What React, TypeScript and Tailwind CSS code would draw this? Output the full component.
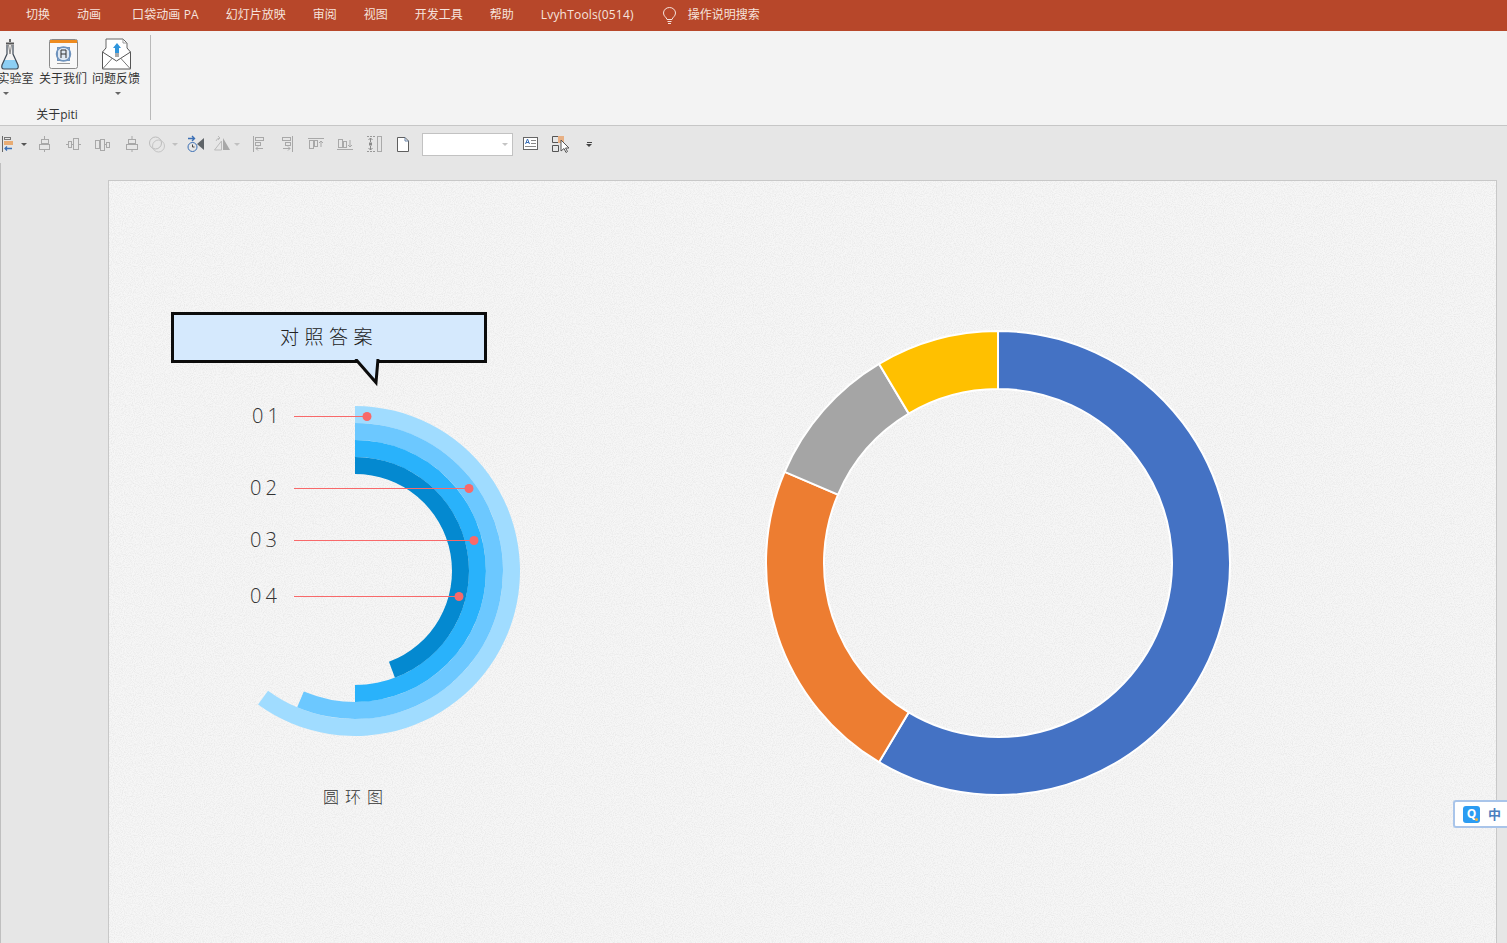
import type { ReactNode } from "react";

const tabs = [
  { label: "切换", cls: "" },
  { label: "动画", cls: "ml-[27px]" },
  { label: "口袋动画 PA", cls: "ml-[31px] tracking-[0.1px]" },
  { label: "幻灯片放映", cls: "ml-[27px]" },
  { label: "审阅", cls: "ml-[27px]" },
  { label: "视图", cls: "ml-[27px]" },
  { label: "开发工具", cls: "ml-[27px]" },
  { label: "帮助", cls: "ml-[27px]" },
  { label: "LvyhTools(0514)", cls: "ml-[27px] tracking-[0.2px]" },
];

function polar(cx: number, cy: number, r: number, deg: number) {
  const a = ((deg - 90) * Math.PI) / 180;
  return [cx + r * Math.cos(a), cy + r * Math.sin(a)];
}

// ring sector going clockwise from the top
function arcPath(cx: number, cy: number, r0: number, r1: number, from: number, to: number) {
  const [ax, ay] = polar(cx, cy, r1, from);
  const [bx, by] = polar(cx, cy, r1, to);
  const [c, d] = polar(cx, cy, r0, to);
  const [e, f] = polar(cx, cy, r0, from);
  const large = to - from > 180 ? 1 : 0;
  return `M${ax} ${ay}A${r1} ${r1} 0 ${large} 1 ${bx} ${by}L${c} ${d}A${r0} ${r0} 0 ${large} 0 ${e} ${f}Z`;
}

function Caret({ color = "#666" }: { color?: string }) {
  return (
    <svg className="block" width="6" height="3" viewBox="0 0 6 3">
      <path d="M0 0h6L3 3z" fill={color} />
    </svg>
  );
}

function ToolIcon({ children, w = 16 }: { children: ReactNode; w?: number }) {
  return (
    <svg className="block shrink-0" width={w} height="18" viewBox={`0 0 ${w} 18`} fill="none" stroke="#a8a8a8" strokeWidth="1">
      {children}
    </svg>
  );
}

function FlaskIcon() {
  return (
    <svg className="block" width="20" height="31" viewBox="0 0 20 31" fill="none">
      <path d="M3.500 30q-2.500-.500-1.500-4l2-5h12l2 5q1 3.500-1.500 4z" fill="#8ccff5" />
      <path d="M7 6v9L2 26q-1 4 2 4h12q3 0 2-4l-5-11V6" stroke="#3f4a57" strokeWidth="1.200" />
      <path d="M6 4.500h8" stroke="#555" strokeWidth="2" />
      <path d="M9 0h2v3H9z" fill="#666" />
      <path d="M8.500 6l1.500 9M11.500 6L10 15" stroke="#888" />
    </svg>
  );
}

function AboutIcon() {
  return (
    <svg className="mb-[1px] block" width="29" height="30" viewBox="0 0 29 30" fill="none">
      <rect x="0.500" y="0.500" width="28" height="29" rx="2" fill="#f8f8f8" stroke="#8a8a8a" />
      <rect x="1" y="1" width="27" height="3" fill="#ee8b1f" />
      <rect x="8.500" y="8.500" width="12" height="13" fill="#dfe8f2" stroke="#6f93bd" />
      <circle cx="14.500" cy="15" r="7" stroke="#6f93bd" strokeWidth="1.500" />
      <path d="M12 11v8M17 11v8M12 11h5M12 15h5" stroke="#333" />
      <path d="M8 24.500h13" stroke="#999" />
    </svg>
  );
}

function MailIcon() {
  return (
    <svg className="block" width="29" height="32" viewBox="0 0 29 32" fill="none">
      <path d="M4 15V1h17l4 4v10" fill="#fff" stroke="#666" />
      <path d="M21 1v4h4" stroke="#999" />
      <path d="M4 10L.500 14v17h28V14L25 10" fill="#fff" stroke="#555" />
      <path d="M.500 14L14.500 23L28.500 14" fill="#fff" stroke="#555" />
      <path d="M.500 31l10-11M28.500 31l-10-11" stroke="#777" />
      <path d="M15 5l4 5h-2v5h-4v-5h-2z" fill="#2f95dc" />
      <path d="M13 16h4M13 18h4" stroke="#555" />
    </svg>
  );
}

function RingChart() {
  const cx = 246;
  const cy = 390;
  const rings = [
    { r0: 148, r1: 165, end: 216, fill: "#a0dcff" },
    { r0: 131, r1: 148, end: 203, fill: "#6cc8ff" },
    { r0: 114, r1: 131, end: 180, fill: "#29b2fb" },
    { r0: 97, r1: 114, end: 159.5, fill: "#0489d0" },
  ];
  const marks = [
    { y: 235, x: 258 },
    { y: 307, x: 360 },
    { y: 359, x: 365 },
    { y: 415, x: 350 },
  ];
  return (
    <svg className="absolute left-0 top-0" width="500" height="640" viewBox="0 0 500 640">
      {rings.map((r) => (
        <path key={r.fill} d={arcPath(cx, cy, r.r0, r.r1, 0, r.end)} fill={r.fill} />
      ))}
      {marks.map((m) => (
        <g key={m.y}>
          <line x1="185" x2={m.x} y1={m.y + 0.5} y2={m.y + 0.5} stroke="#f8696a" strokeWidth="1" />
          <circle cx={m.x} cy={m.y + 0.5} r="4.500" fill="#f8696a" />
        </g>
      ))}
    </svg>
  );
}

function DonutChart() {
  const c = 232;
  const parts = [
    { from: 0, to: 210.86, fill: "#4472c4" },
    { from: 210.86, to: 293.14, fill: "#ed7d31" },
    { from: 293.14, to: 329.14, fill: "#a5a5a5" },
    { from: 329.14, to: 360, fill: "#ffc000" },
  ];
  return (
    <svg className="absolute left-[657px] top-[149.500px] overflow-visible" width="464" height="464" viewBox="0 0 464 464">
      {parts.map((p) => (
        <path key={p.fill} d={arcPath(c, c, 174, 232, p.from, p.to)} fill={p.fill} stroke="#fff" strokeWidth="2" />
      ))}
    </svg>
  );
}

const numbers = [
  { t: "01", pos: "left-[143px] top-[221px]" },
  { t: "02", pos: "left-[141px] top-[293px]" },
  { t: "03", pos: "left-[141px] top-[345px]" },
  { t: "04", pos: "left-[141px] top-[401px]" },
];

export default function App() {
  return (
    <div className="flex h-[943px] w-[1507px] flex-col overflow-hidden bg-[#e6e6e6] font-['Open_Sans','Noto_Sans_CJK_SC',sans-serif]">
      {/* title tabs */}
      <div className="flex h-[31px] shrink-0 items-center bg-[#b7472a] pb-[2px] pl-[26px] text-[12px] text-[#f6e3dd]">
        {tabs.map((t) => (
          <span key={t.label} className={`whitespace-nowrap ${t.cls}`}>
            {t.label}
          </span>
        ))}
        <svg className="ml-[28px] mt-[2px]" width="15" height="18" viewBox="0 0 15 18" fill="none" stroke="#f6e3dd">
          <path d="M5 12.500C4.500 10 1.500 9.500 1.500 6a6 5.500 0 0 1 12 0c0 3.500-3 4-3.500 6.500z" />
          <path d="M5.500 14.500h4M6 16.500h3" />
        </svg>
        <span className="ml-[11px]">操作说明搜索</span>
      </div>

      {/* ribbon */}
      <div className="flex h-[95px] shrink-0 border-b border-[#c6c6c6] bg-[#f3f3f3] pt-[4px]">
        <div className="flex h-[85px] w-[151px] flex-col border-r border-[#b9b9b9]">
          <div className="flex h-[61px] text-[12px] leading-[17px] text-[#333]">
            <div className="ml-[-8px] flex w-[47px] flex-col">
              <div className="flex h-[35px] items-end pl-[8px]">
                <FlaskIcon />
              </div>
              <span className="text-center whitespace-nowrap">实验室</span>
              <div className="ml-[11px] mt-[5px]">
                <Caret />
              </div>
            </div>
            <div className="flex w-[48px] flex-col items-center">
              <div className="flex h-[35px] items-end">
                <AboutIcon />
              </div>
              <span className="whitespace-nowrap">关于我们</span>
            </div>
            <div className="ml-[5px] flex w-[48px] flex-col items-center">
              <div className="flex h-[35px] items-end">
                <MailIcon />
              </div>
              <span className="whitespace-nowrap">问题反馈</span>
              <div className="ml-[4px] mt-[5px]">
                <Caret />
              </div>
            </div>
          </div>
          <span className="mt-[11px] w-[114px] text-center text-[12px] leading-[17px] text-[#333]">关于piti</span>
        </div>
      </div>

      {/* quick access toolbar */}
      <div className="flex h-[37px] shrink-0 items-center bg-[#e6e6e6] pb-[1px]">
        <ToolIcon w={14}>
          <path d="M2.500 1v16" stroke="#666" />
          <rect x="4.500" y="2.500" width="6" height="2" stroke="#777" />
          <rect x="4" y="6" width="9" height="4" fill="#e8ac74" stroke="none" />
          <path d="M12 13.500H5M7 11.500l-2 2 2 2" stroke="#3b6fb5" strokeWidth="1.300" />
        </ToolIcon>
        <div className="ml-[7px]">
          <Caret color="#555" />
        </div>
        <div className="ml-[9px] flex items-center gap-[13px]">
          <ToolIcon>
            <path d="M8.500 1v16" />
            <rect x="5.500" y="4.500" width="7" height="4" fill="#e6e6e6" />
            <rect x="3.500" y="9.500" width="10" height="5" fill="#e6e6e6" />
          </ToolIcon>
          <ToolIcon>
            <path d="M1 9.500h15" />
            <rect x="3.500" y="6.500" width="3" height="6" fill="#e6e6e6" />
            <rect x="8.500" y="3.500" width="5" height="11" fill="#e6e6e6" />
          </ToolIcon>
          <ToolIcon>
            <path d="M1 9.500h15" />
            <rect x="1.500" y="5.500" width="4" height="8" fill="#e6e6e6" />
            <rect x="6.500" y="4.500" width="4" height="11" fill="#e6e6e6" />
            <rect x="12.500" y="7.500" width="3" height="5" fill="#e6e6e6" />
          </ToolIcon>
          <div className="ml-[1px]">
            <ToolIcon>
              <path d="M8 1v16" />
              <rect x="4.500" y="4.500" width="7" height="4" fill="#e6e6e6" />
              <rect x="2.500" y="9.500" width="11" height="5" fill="#e6e6e6" />
            </ToolIcon>
          </div>
        </div>
        <div className="ml-[9px] flex items-center gap-[7px]">
          <ToolIcon>
            <circle cx="6.500" cy="8" r="6" stroke="#bbb" />
            <circle cx="9.500" cy="11" r="6" stroke="#c4c4c4" />
          </ToolIcon>
          <Caret color="#c0c0c0" />
        </div>
        <div className="ml-[9px]">
          <ToolIcon w={18}>
            <path d="M1 3.500h6M5 1l2.500 2.500L5 6" stroke="#3b6fb5" strokeWidth="1.400" />
            <circle cx="5.500" cy="12" r="4.500" stroke="#3b6fb5" />
            <path d="M5.500 9.500V12h2" stroke="#444" />
            <path d="M17 3v12l-7-6z" fill="#5f6468" stroke="none" />
          </ToolIcon>
        </div>
        <div className="ml-[8px] flex items-center gap-[3px]">
          <ToolIcon w={18}>
            <path d="M8.500 6v9h-7z" stroke="#bbb" />
            <path d="M3 6q1-3 4-3M5 1l2 2-2 2" stroke="#bbb" />
            <path d="M10 3l7 12h-7z" fill="#a8a8a8" stroke="none" />
          </ToolIcon>
          <Caret color="#c0c0c0" />
        </div>
        <div className="ml-[12px]">
          <ToolIcon w={13}>
            <path d="M1.500 1v16" />
            <rect x="3.500" y="2.500" width="8" height="3" />
            <rect x="3.500" y="7.500" width="5" height="3" />
            <path d="M11 13.500H4M6 11.500l-2 2 2 2" />
          </ToolIcon>
        </div>
        <div className="ml-[16px]">
          <ToolIcon w={13}>
            <path d="M11.500 1v16" />
            <rect x="1.500" y="2.500" width="8" height="3" />
            <rect x="4.500" y="7.500" width="5" height="3" />
            <path d="M2 13.500h7M7 11.500l2 2-2 2" />
          </ToolIcon>
        </div>
        <div className="ml-[14px]">
          <ToolIcon>
            <path d="M0 3.500h16" />
            <rect x="1.500" y="5.500" width="4" height="8" />
            <rect x="6.500" y="5.500" width="3" height="6" />
            <path d="M13 12V6M11 8l2-2 2 2" />
          </ToolIcon>
        </div>
        <div className="ml-[13px]">
          <ToolIcon>
            <path d="M0 14.500h16" />
            <rect x="1.500" y="4.500" width="4" height="8" />
            <rect x="6.500" y="6.500" width="3" height="6" />
            <path d="M13 5v7M11 10l2 2 2-2" />
          </ToolIcon>
        </div>
        <div className="ml-[13px]">
          <ToolIcon>
            <path d="M1 1.500h9M1 16.500h9" strokeDasharray="2 1" stroke="#999" />
            <path d="M4.500 3v4M2.500 5l2-2 2 2M4.500 15v-4M2.500 13l2 2 2-2" stroke="#8a8a8a" />
            <rect x="3.500" y="8" width="2" height="2" stroke="#8a8a8a" />
            <rect x="11.500" y="1.500" width="4" height="15" stroke="#aaa" />
          </ToolIcon>
        </div>
        <div className="ml-[15px]">
          <ToolIcon w={12}>
            <path d="M.500 2.500h7.500l3.500 3.500v10.500H.500z" fill="#fff" stroke="#5f5f5f" />
            <path d="M8 2.500V6h3.500" stroke="#6a85a8" />
          </ToolIcon>
        </div>
        <div className="ml-[13px] flex h-[23px] w-[91px] items-center justify-end border border-[#c2c2c2] bg-white pr-[4px]">
          <Caret color="#c4c4c4" />
        </div>
        <div className="ml-[10px]">
          <ToolIcon>
            <rect x="0.500" y="2.500" width="14" height="12" fill="#fff" stroke="#666" />
            <path d="M2.500 9l2-5 2 5M3 7.500h3" stroke="#3b6fb5" />
            <path d="M8 5.500h5M8 8.500h5M2 11.500h11" stroke="#888" />
          </ToolIcon>
        </div>
        <div className="ml-[13px]">
          <ToolIcon w={17}>
            <path d="M6 1.500H.500v6H6M.500 10.500h6v6h-6z" stroke="#555" />
            <rect x="6" y="1" width="6" height="7" fill="#e8b084" stroke="none" />
            <path d="M9 5v11l3-2.500 2 4 1.500-1-2-3.500H17z" fill="#fff" stroke="#555" />
          </ToolIcon>
        </div>
        <div className="ml-[17px] flex flex-col items-center gap-[1px]">
          <div className="h-px w-[5px] bg-[#444]" />
          <Caret color="#444" />
        </div>
      </div>

      {/* slide canvas */}
      <div className="relative flex min-h-0 flex-1 border-l border-[#bfbfbf] pl-[107px] pr-[10px] pt-[17px]">
        <div className="relative flex-1 overflow-hidden border-l border-r border-t border-[#c8c8c8] bg-[#f6f6f6]">
          {/* paper grain of the slide background */}
          <svg className="absolute inset-0 h-full w-full opacity-[0.07]">
            <filter id="grain">
              <feTurbulence type="fractalNoise" baseFrequency="0.9" numOctaves="2" />
              <feColorMatrix type="matrix" values="0 0 0 0 0  0 0 0 0 0  0 0 0 0 0  1.500 0 0 0 -0.550" />
            </filter>
            <rect width="100%" height="100%" filter="url(#grain)" />
          </svg>

          <RingChart />
          <DonutChart />

          <div className="absolute left-[62px] top-[131px] flex h-[51px] w-[316px] items-center justify-center border-[3px] border-[#0c0c0c] bg-[#d5e9fd] pb-[1px] text-[19px] font-light tracking-[5.500px] text-[#222]">
            对照答案
          </div>
          <svg className="absolute left-[245px] top-[178px]" width="30" height="30" viewBox="0 0 30 30">
            <path d="M1.500 0L22 23.500L24 0" fill="#d5e9fd" stroke="#0c0c0c" strokeWidth="3" />
          </svg>

          {numbers.map((n) => (
            <span key={n.t} className={`absolute text-[20px] font-light leading-[28px] tracking-[4px] text-[#333] ${n.pos}`}>
              {n.t}
            </span>
          ))}
          <span className="absolute left-[214px] top-[604px] whitespace-nowrap text-[16px] font-light leading-[24px] tracking-[6px] text-[#333]">圆环图</span>
        </div>

        {/* IME floating bar */}
        <div className="absolute left-[1452px] top-[637px] flex h-[28px] w-[60px] items-center rounded-l-[3px] border-[2px] border-r-0 border-[#a9c5ea] bg-white pl-[8px]">
          <div className="relative flex h-[17px] w-[17px] items-center justify-center rounded-[3px] bg-[#2b9cf2] text-[12px] font-bold leading-none text-white">
            Q
            <div className="absolute bottom-[2px] right-[2px] h-[3px] w-[3px] rounded-full bg-[#f2b33d]" />
          </div>
          <span className="ml-[8px] text-[13px] font-bold leading-none text-[#4c7fbf]">中</span>
        </div>
      </div>
    </div>
  );
}
